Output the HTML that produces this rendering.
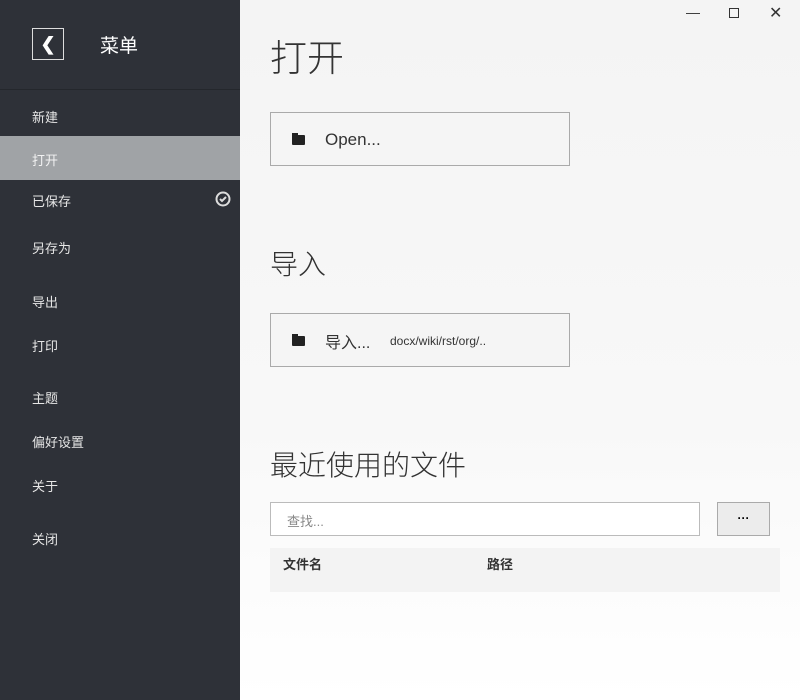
<!DOCTYPE html>
<html><head><meta charset="utf-8"><style>
*{margin:0;padding:0;box-sizing:border-box}
body{width:800px;height:700px;overflow:hidden;font-family:"Liberation Sans","Noto Sans CJK SC",sans-serif;background:#f7f7f7;position:relative}
#side{position:absolute;left:0;top:0;width:240px;height:700px;background:#2e3138;color:#e6e6e6}
.back{position:absolute;left:32px;top:28px;width:32px;height:32px;border:1px solid #ddd;color:#fff;font-size:18px;font-weight:bold;text-align:center;line-height:30px}
.title{position:absolute;left:100px;top:31px;font-size:19px;color:#fff}
.sep{position:absolute;left:0;top:89px;width:240px;height:1px;background:#24272c}
.it{position:absolute;left:32px;font-size:13px;color:#e6e6e6}
.sel{position:absolute;left:0;top:136px;width:240px;height:44px;background:#a0a3a6}
#main{position:absolute;left:240px;top:0;width:560px;height:700px;background:linear-gradient(#f4f4f4,#f8f8f8 60%,#fff)}
h1{position:absolute;font-weight:300;color:#333;font-family:"Liberation Sans","Noto Sans CJK SC",sans-serif}
.btn{position:absolute;left:30px;width:300px;height:54px;border:1px solid #aaa;background:#f5f5f5;color:#333}
.fold{position:absolute;left:21px;top:22px;width:13px;height:10px;background:#222;border-radius:1px}
.fold:before{content:"";position:absolute;left:0;top:-2px;width:6px;height:3px;background:#222}
.wc{position:absolute;top:4px;font-size:14px;color:#333}
</style></head><body>
<div id="side">
<div class="back">❮</div><div class="title">菜单</div><div class="sep"></div>
<div class="sel"></div>
<div class="it" style="top:107px">新建</div>
<div class="it" style="top:150px;color:#f2f2f2">打开</div>
<div class="it" style="top:191px">已保存</div>
<svg style="position:absolute;left:215px;top:191px" width="16" height="16" viewBox="0 0 16 16"><circle cx="8" cy="8" r="6.5" fill="none" stroke="#ddd" stroke-width="2"/><path d="M5 8l2 2 4-4" fill="none" stroke="#ddd" stroke-width="2"/></svg>
<div class="it" style="top:238px">另存为</div>
<div class="it" style="top:292px">导出</div>
<div class="it" style="top:336px">打印</div>
<div class="it" style="top:388px">主题</div>
<div class="it" style="top:432px">偏好设置</div>
<div class="it" style="top:476px">关于</div>
<div class="it" style="top:529px">关闭</div>
</div>
<div id="main">
<div class="wc" style="left:446px">—</div>
<div style="position:absolute;left:489px;top:8px;width:10px;height:10px;border:1px solid #333"></div>
<div class="wc" style="left:529px;top:3px;font-size:16px">✕</div>
<h1 style="left:30px;top:28px;font-size:37px">打开</h1>
<div class="btn" style="top:112px"><div class="fold"></div><span style="position:absolute;left:54px;top:17px;font-size:17px">Open...</span></div>
<h1 style="left:30px;top:243px;font-size:28px">导入</h1>
<div class="btn" style="top:313px"><div class="fold"></div><span style="position:absolute;left:54px;top:15px;font-size:16px">导入...</span><span style="position:absolute;left:119px;top:20px;font-size:12px">docx/wiki/rst/org/..</span></div>
<h1 style="left:30px;top:444px;font-size:28px">最近使用的文件</h1>
<div style="position:absolute;left:30px;top:502px;width:430px;height:34px;border:1px solid #bbb;background:#fff;font-size:13px;color:#888;padding:8px 16px">查找...</div>
<div style="position:absolute;left:477px;top:502px;width:53px;height:34px;border:1px solid #aaa;background:#ececec;text-align:center;font-size:12px;font-weight:bold;line-height:30px">···</div>
<div style="position:absolute;left:30px;top:548px;width:510px;height:44px;background:#f3f3f3;font-size:13px;font-weight:bold;color:#333"><span style="position:absolute;left:13px;top:6px">文件名</span><span style="position:absolute;left:217px;top:6px">路径</span></div>
</div>
</body></html>
